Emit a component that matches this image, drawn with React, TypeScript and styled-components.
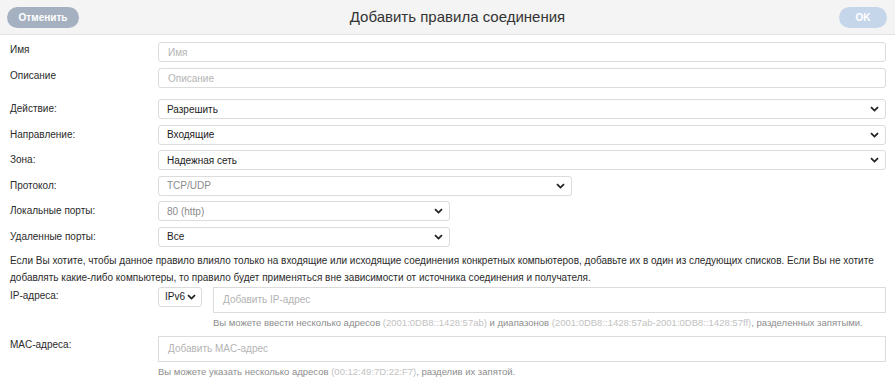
import React from 'react';
import styled, { createGlobalStyle } from 'styled-components';

const GlobalStyle = createGlobalStyle`
  html, body {
    margin: 0;
    padding: 0;
    background: #fff;
  }
  body {
    font-family: 'Liberation Sans', Arial, sans-serif;
    color: #2b2b2b;
  }
`;

const Page = styled.div`
  width: 895px;
  height: 383px;
  overflow: hidden;
  background: #fff;
`;

const Header = styled.div`
  height: 34px;
  display: flex;
  align-items: center;
  justify-content: space-between;
  padding: 0 8px 0 7px;
  background: #f4f4f4;
  border-bottom: 1px solid #e2e2e2;
  position: relative;
`;

const Title = styled.h1`
  position: absolute;
  left: 20px;
  right: 0;
  top: 0;
  margin: 0;
  line-height: 33px;
  text-align: center;
  font-size: 15px;
  font-weight: normal;
  color: #333;
  pointer-events: none;
`;

const PillButton = styled.button<{ tone: 'gray' | 'blue'; w: number }>`
  width: ${({ w }) => w}px;
  height: 21px;
  border: 0;
  border-radius: 11px;
  background: ${({ tone }) => (tone === 'gray' ? '#a5b1c1' : '#c6d6ea')};
  color: #fff;
  font-family: 'Liberation Sans', Arial, sans-serif;
  font-size: 10px;
  font-weight: bold;
  padding: 0;
  margin-top: 1px;
`;

const Form = styled.div`
  padding: 7px 9px 0 10px;
`;

const Row = styled.div<{ gap: number }>`
  display: grid;
  grid-template-columns: 148px minmax(0, 1fr);
  align-items: start;
  margin-bottom: ${({ gap }) => gap}px;
`;

const Label = styled.div<{ top: number }>`
  font-size: 10px;
  color: #2b2b2b;
  padding-top: ${({ top }) => top}px;
`;

const TextInput = styled.div<{ h: number; grow?: boolean }>`
  height: ${({ h }) => h}px;
  box-sizing: border-box;
  border: 1px solid #dcdcdc;
  border-radius: ${({ h }) => (h > 22 ? 0 : 3)}px;
  display: flex;
  align-items: center;
  padding: 0 9px;
  font-size: 10px;
  color: #b4b4b4;
  flex: ${({ grow }) => (grow ? '1 1 auto' : 'none')};
`;

const SelectBox = styled.div<{ w?: number; muted?: boolean }>`
  height: 20px;
  box-sizing: border-box;
  width: ${({ w }) => (w ? `${w}px` : '100%')};
  flex: none;
  border: 1px solid #dcdcdc;
  border-radius: 3px;
  display: flex;
  align-items: center;
  justify-content: space-between;
  padding: 0 6px 0 8px;
  font-size: 10px;
  color: ${({ muted }) => (muted ? '#8a8a8a' : '#222')};
`;

const Chevron = () => (
  <svg width="9" height="6" viewBox="0 0 9 6">
    <path d="M1 1.2 L4.5 4.6 L8 1.2" fill="none" stroke="#222" strokeWidth="1.8" />
  </svg>
);

const Select = ({ value, w, muted }: { value: string; w?: number; muted?: boolean }) => (
  <SelectBox w={w} muted={muted}>
    <span>{value}</span>
    <Chevron />
  </SelectBox>
);

const SmallSelect = styled(SelectBox)`
  padding: 0 5px 0 6px;
`;

const Note = styled.p`
  margin: 0 0 1px;
  font-size: 10px;
  line-height: 17px;
  color: #2b2b2b;
`;

const FieldCol = styled.div`
  display: flex;
  flex-direction: column;
`;

const InlineFields = styled.div`
  display: flex;
  align-items: flex-start;
  gap: 11px;
`;

const Hint = styled.div<{ indent: number }>`
  font-size: 9.5px;
  color: #8d8d8d;
  padding-left: ${({ indent }) => indent}px;
  margin-top: 4px;
  white-space: nowrap;
`;

const Example = styled.span`
  color: #c2c2c2;
`;

export default function App() {
  return (
    <Page>
      <GlobalStyle />
      <Header>
        <PillButton tone="gray" w={72}>Отменить</PillButton>
        <Title>Добавить правила соединения</Title>
        <PillButton tone="blue" w={48}>OK</PillButton>
      </Header>
      <Form>
        <Row gap={6}>
          <Label top={2}>Имя</Label>
          <TextInput h={20}>Имя</TextInput>
        </Row>
        <Row gap={11}>
          <Label top={2}>Описание</Label>
          <TextInput h={20}>Описание</TextInput>
        </Row>
        <Row gap={5.5}>
          <Label top={4}>Действие:</Label>
          <Select value="Разрешить" />
        </Row>
        <Row gap={5.5}>
          <Label top={4}>Направление:</Label>
          <Select value="Входящие" />
        </Row>
        <Row gap={5.5}>
          <Label top={4}>Зона:</Label>
          <Select value="Надежная сеть" />
        </Row>
        <Row gap={5.5}>
          <Label top={4}>Протокол:</Label>
          <Select value="TCP/UDP" w={414} muted />
        </Row>
        <Row gap={5.5}>
          <Label top={4}>Локальные порты:</Label>
          <Select value="80 (http)" w={292} muted />
        </Row>
        <Row gap={5}>
          <Label top={4}>Удаленные порты:</Label>
          <Select value="Все" w={292} />
        </Row>
        <Note>
          Если Вы хотите, чтобы данное правило влияло только на входящие или исходящие соединения
          конкретных компьютеров, добавьте их в один из следующих списков. Если Вы не хотите добавлять
          какие-либо компьютеры, то правило будет применяться вне зависимости от источника соединения
          и получателя.
        </Note>
        <Row gap={8}>
          <Label top={3}>IP-адреса:</Label>
          <FieldCol>
            <InlineFields>
              <SmallSelect w={44}>
                <span>IPv6</span>
                <Chevron />
              </SmallSelect>
              <TextInput h={26} grow>Добавить IP-адрес</TextInput>
            </InlineFields>
            <Hint indent={55}>
              Вы можете ввести несколько адресов <Example>(2001:0DB8::1428:57ab)</Example> и диапазонов{' '}
              <Example>(2001:0DB8::1428:57ab-2001:0DB8::1428:57ff)</Example>, разделенных запятыми.
            </Hint>
          </FieldCol>
        </Row>
        <Row gap={0}>
          <Label top={3}>MAC-адреса:</Label>
          <FieldCol>
            <TextInput h={26}>Добавить MAC-адрес</TextInput>
            <Hint indent={0}>
              Вы можете указать несколько адресов <Example>(00:12:49:7D:22:F7)</Example>, разделив их запятой.
            </Hint>
          </FieldCol>
        </Row>
      </Form>
    </Page>
  );
}
